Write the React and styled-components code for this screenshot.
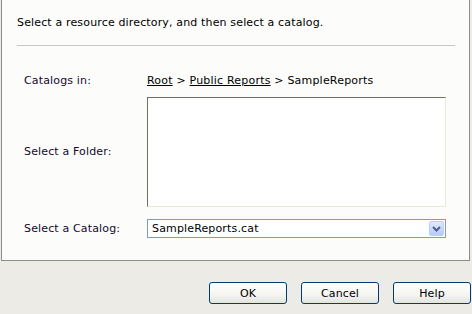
import React from "react";
import styled, { createGlobalStyle } from "styled-components";

const Global = createGlobalStyle`
  html, body {
    margin: 0;
    padding: 0;
    background: #ecebe6;
  }
  body {
    font-family: "DejaVu Sans", Verdana, sans-serif;
    font-size: 11px;
    letter-spacing: 0.15px;
    color: #000;
  }
`;

const Page = styled.div`
  width: 472px;
  height: 314px;
  overflow: hidden;
`;

const Panel = styled.div`
  margin-left: 1px;
  width: 469px;
  height: 261px;
  background: #fcfdfa;
  border: 1px solid #8c8c8c;
  border-top: none;
  padding: 0 14px 0 15px;
  box-sizing: border-box;
`;

const Intro = styled.p`
  margin: 0;
  padding-top: 16px;
  line-height: 14px;
`;

const Rule = styled.hr`
  margin: 15px 0 0;
  border: none;
  border-top: 1px solid #c8c8c8;
  height: 0;
`;

const Form = styled.div`
  display: grid;
  grid-template-columns: 123px 299px;
  row-gap: 9px;
  padding: 28px 0 0 7px;
  align-items: center;
`;

const Label = styled.div`
  line-height: 14px;
  color: #15082d;
  margin-top: ${(p) => p.$offset || 0}px;
`;

const Crumbs = styled.div`
  line-height: 14px;
  color: #000;
  letter-spacing: 0.2px;
`;

const Link = styled.a`
  color: #000;
  text-decoration: underline;
  cursor: pointer;
`;

const FolderBox = styled.div`
  height: 110px;
  box-sizing: border-box;
  background: #fff;
  border-top: 1px solid #716f64;
  border-left: 1px solid #716f64;
  border-right: 1px solid #ece9d8;
  border-bottom: 1px solid #ece9d8;
`;

const Select = styled.div`
  margin-top: 3px;
  height: 19px;
  box-sizing: border-box;
  border: 1px solid #7f9db9;
  background: #fff;
  display: flex;
  align-items: center;
  justify-content: space-between;
  padding-left: 4px;
`;

const Arrow = styled.div`
  width: 15px;
  height: 15px;
  margin-right: 1px;
  border-radius: 2px;
  background: linear-gradient(#dfe8fe, #b8cafb);
  border: 1px solid #bccdf9;
  box-sizing: border-box;
  display: flex;
  align-items: center;
  justify-content: center;
`;

const Footer = styled.div`
  display: flex;
  justify-content: flex-end;
  gap: 14px;
  padding: 21px 1px 0 0;
`;

const Button = styled.button`
  width: 78px;
  height: 22px;
  border: 1px solid #003c74;
  border-radius: 3px;
  background: linear-gradient(#ffffff 0%, #f4f4f0 60%, #e4e3dc 100%);
  font-family: inherit;
  font-size: 11px;
  letter-spacing: inherit;
  color: #000;
  padding: 0;
`;

export default function App() {
  return (
    <Page>
      <Global />
      <Panel>
        <Intro>Select a resource directory, and then select a catalog.</Intro>
        <Rule />
        <Form>
          <Label>Catalogs in:</Label>
          <Crumbs>
            <Link>Root</Link> &gt; <Link>Public Reports</Link> &gt; SampleReports
          </Crumbs>
          <Label>Select a Folder:</Label>
          <FolderBox />
          <Label $offset={3}>Select a Catalog:</Label>
          <Select>
            <span>SampleReports.cat</span>
            <Arrow>
              <svg width="9" height="6" viewBox="0 0 9 6">
                <path d="M1 1 L4.5 4.5 L8 1" fill="none" stroke="#4d6185" strokeWidth="2" />
              </svg>
            </Arrow>
          </Select>
        </Form>
      </Panel>
      <Footer>
        <Button>OK</Button>
        <Button>Cancel</Button>
        <Button>Help</Button>
      </Footer>
    </Page>
  );
}
